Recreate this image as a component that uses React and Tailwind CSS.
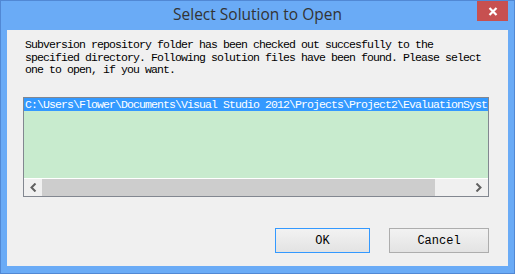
import React from 'react';

const mono = { fontFamily: '"Liberation Mono", "DejaVu Sans Mono", monospace' };

function Chevron({ dir }) {
  return (
    <svg width="7" height="9" viewBox="0 0 7 9" className="block">
      {dir === 'left' ? (
        <path d="M5.5 0.5 L1.5 4.5 L5.5 8.5" fill="none" stroke="#606060" strokeWidth="2" />
      ) : (
        <path d="M1.5 0.5 L5.5 4.5 L1.5 8.5" fill="none" stroke="#606060" strokeWidth="2" />
      )}
    </svg>
  );
}

function Button({ children, focused }) {
  return (
    <button
      type="button"
      className={`h-[25px] flex items-center justify-center border bg-gradient-to-b from-[#f2f2f2] to-[#e3e3e3] text-[12px] text-black ${
        focused ? 'w-[95px] border-[#3399ff]' : 'w-[100px] border-[#adadad]'
      }`}
      style={mono}
    >
      {children}
    </button>
  );
}

export default function App() {
  // the list clips the path at its right edge, so only the visible part is kept
  const path = 'C:\\Users\\Flower\\Documents\\Visual Studio 2012\\Projects\\Project2\\EvaluationSyst';

  return (
    <div className="w-[515px] h-[274px] bg-[#6aabf6] border border-[#5188d4] flex flex-col">
      {/* Title bar */}
      <div className="h-[29px] relative flex items-center justify-center">
        <span
          className="text-[15.5px] text-[#333] leading-none pb-[2px]"
          style={{ fontFamily: '"Open Sans", "Noto Sans", sans-serif' }}
        >
          Select Solution to Open
        </span>
        <div className="absolute right-[6px] top-0 w-[31px] h-[20px] bg-[#c75050] flex items-center justify-center">
          <svg width="10" height="9" viewBox="0 0 10 9">
            <path d="M1.5 1 L8.5 8 M8.5 1 L1.5 8" stroke="#fff" strokeWidth="2.2" />
          </svg>
        </div>
      </div>

      {/* Client area */}
      <div className="mx-[6px] h-[236px] bg-[#f0f0f0] flex flex-col pl-[16px] pr-[19px]">
        <div className="h-[67px] pt-[9px] pl-[2px]">
          <p className="text-[11.5px] tracking-[-0.9px] leading-[12.5px] text-black whitespace-pre" style={mono}>
            {'Subversion repository folder has been checked out succesfully to the\nspecified directory. Following solution files have been found. Please select\none to open, if you want.'}
          </p>
        </div>

        {/* List box */}
        <div className="h-[100px] border border-[#828790] flex flex-col">
          <div className="flex-1 bg-[#c8ebce] overflow-hidden">
            <div
              className="h-[13px] bg-[#3399ff] text-white text-[11.5px] tracking-[-0.9px] leading-[13px] pl-[1px] whitespace-nowrap"
              style={mono}
            >
              {path}
            </div>
          </div>
          <div className="h-[1px] bg-white" />
          <div className="h-[17px] bg-[#f0f0f0] flex items-stretch">
            <div className="w-[18px] flex items-center justify-center">
              <Chevron dir="left" />
            </div>
            <div className="w-[393px] bg-[#cdcdcd]" />
            <div className="flex-1 flex items-center justify-end pr-[6px]">
              <Chevron dir="right" />
            </div>
          </div>
        </div>

        {/* Buttons */}
        <div className="mt-[31px] flex justify-end gap-[19px]">
          <Button focused>OK</Button>
          <Button>Cancel</Button>
        </div>
      </div>
    </div>
  );
}
